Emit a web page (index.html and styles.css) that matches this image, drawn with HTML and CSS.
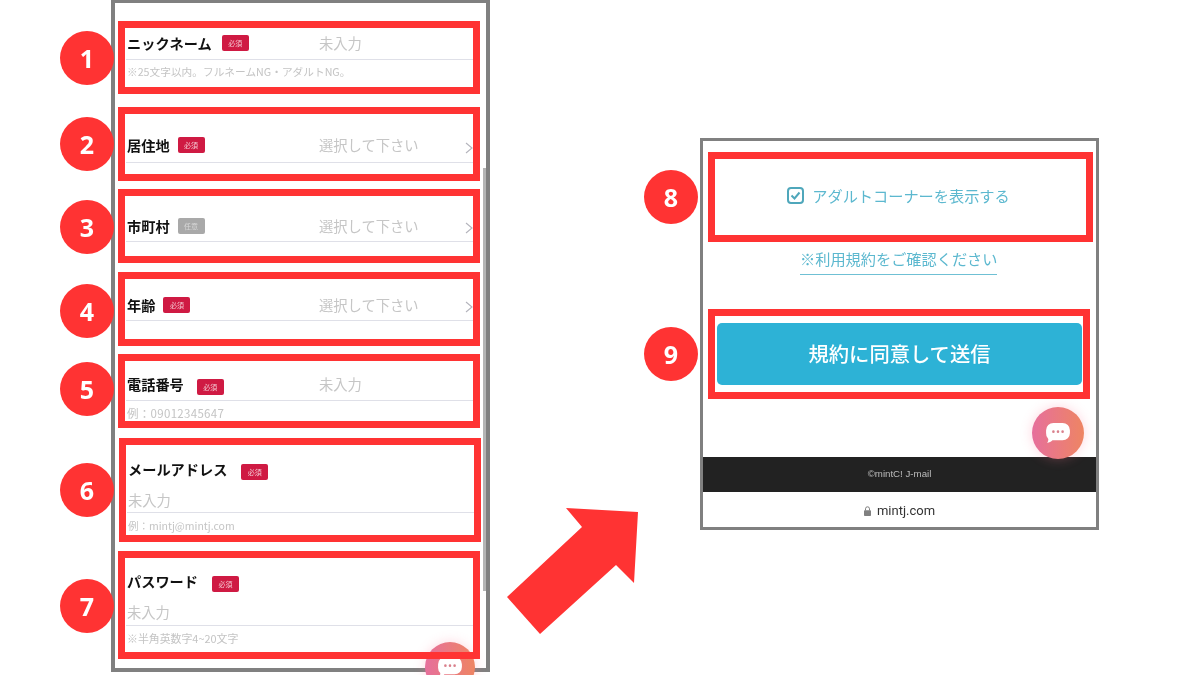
FILE: index.html
```html
<!DOCTYPE html>
<html lang="ja">
<head>
<meta charset="utf-8">
<title>mintC! J-mail 登録フォーム</title>
<link rel="stylesheet" href="styles.css">
</head>
<body>
<main class="stage">
  <section class="phone phone-form">
    <div class="scrollbar"></div>
    <div class="chat chat-form">
      <svg class="chat-icon" viewBox="0 0 28 24"><path d="M9 1h10a8 8 0 0 1 8 8v3a8 8 0 0 1-8 8H8c-1.500 1.600-3.500 2.600-6 3 1-1.200 1.500-2.700 1.400-4.500A8 8 0 0 1 1 12V9a8 8 0 0 1 8-8z" fill="#fff"/><circle cx="9" cy="10.500" r="1.400" fill="#d9808c"/><circle cx="14" cy="10.500" r="1.400" fill="#d9808c"/><circle cx="19" cy="10.500" r="1.400" fill="#d9808c"/></svg>
    </div>

    <div class="field f1">
      <span class="num">1</span>
      <div class="row row-split">
        <div class="label">ニックネーム<span class="badge badge-gap10">必須</span></div>
        <div class="value">未入力</div>
      </div>
      <p class="hint">※25文字以内。フルネームNG・アダルトNG。</p>
    </div>

    <div class="field f2">
      <span class="num">2</span>
      <div class="row row-split">
        <div class="label">居住地<span class="badge">必須</span></div>
        <div class="value">選択して下さい</div>
        <svg class="chevron" viewBox="0 0 8 12"><path d="M1 1l6 5-6 5" fill="none" stroke="#b4b4bc" stroke-width="1.100"/></svg>
      </div>
    </div>

    <div class="field f3">
      <span class="num">3</span>
      <div class="row row-split">
        <div class="label">市町村<span class="badge badge-optional">任意</span></div>
        <div class="value">選択して下さい</div>
        <svg class="chevron" viewBox="0 0 8 12"><path d="M1 1l6 5-6 5" fill="none" stroke="#b4b4bc" stroke-width="1.100"/></svg>
      </div>
    </div>

    <div class="field f4">
      <span class="num">4</span>
      <div class="row row-split">
        <div class="label">年齢<span class="badge">必須</span></div>
        <div class="value">選択して下さい</div>
        <svg class="chevron" viewBox="0 0 8 12"><path d="M1 1l6 5-6 5" fill="none" stroke="#b4b4bc" stroke-width="1.100"/></svg>
      </div>
    </div>

    <div class="field f5">
      <span class="num">5</span>
      <div class="row row-split">
        <div class="label">電話番号<span class="badge badge-wide">必須</span></div>
        <div class="value">未入力</div>
      </div>
      <p class="hint">例：09012345647</p>
    </div>

    <div class="field f6">
      <span class="num">6</span>
      <div class="label label-stack">メールアドレス<span class="badge badge-wide">必須</span></div>
      <div class="row"><div class="value">未入力</div></div>
      <p class="hint">例：mintj@mintj.com</p>
    </div>

    <div class="field f7">
      <span class="num">7</span>
      <div class="label label-stack">パスワード<span class="badge badge-wide">必須</span></div>
      <div class="row"><div class="value">未入力</div></div>
      <p class="hint">※半角英数字4~20文字</p>
    </div>
  </section>

  <svg class="arrow" viewBox="0 0 140 132"><polygon points="59,0 131,4 127,75 109,57 33,126 0,89 75,19" fill="#ff3333"/></svg>

  <section class="phone phone-submit">
    <div class="field f8">
      <span class="num">8</span>
      <div class="adult">
        <svg class="check" viewBox="0 0 17 17"><rect x="1" y="1" width="15" height="15" rx="3" fill="none" stroke="#4fa7bb" stroke-width="2"/><path d="M4.500 8.500l3 3 5-6" fill="none" stroke="#4fa7bb" stroke-width="2"/></svg>
        アダルトコーナーを表示する
      </div>
    </div>
    <a class="terms">※利用規約をご確認ください</a>
    <div class="field f9">
      <span class="num">9</span>
      <div class="submit">規約に同意して送信</div>
    </div>
    <div class="chat chat-submit">
      <svg class="chat-icon" viewBox="0 0 28 24"><path d="M9 1h10a8 8 0 0 1 8 8v3a8 8 0 0 1-8 8H8c-1.500 1.600-3.500 2.600-6 3 1-1.200 1.500-2.700 1.400-4.500A8 8 0 0 1 1 12V9a8 8 0 0 1 8-8z" fill="#fff"/><circle cx="9" cy="10.500" r="1.400" fill="#d9808c"/><circle cx="14" cy="10.500" r="1.400" fill="#d9808c"/><circle cx="19" cy="10.500" r="1.400" fill="#d9808c"/></svg>
    </div>
    <footer class="copyright">©mintC! J-mail</footer>
    <div class="address">
      <svg class="lock" viewBox="0 0 7 10"><path d="M1.500 4.500V2.800a2 2 0 0 1 4 0v1.700" fill="none" stroke="#808080" stroke-width="1"/><rect x="0" y="4.200" width="7" height="5.800" rx=".8" fill="#808080"/></svg>
      mintj.com
    </div>
  </section>
</main>
</body>
</html>
```

FILE: styles.css
```css
* { box-sizing: border-box; }

html, body { margin: 0; padding: 0; background: #fff; }

body {
  font-family: "Noto Sans CJK JP", "Noto Sans", sans-serif;
  color: #111;
}

.stage {
  position: relative;
  width: 1200px;
  height: 675px;
  overflow: hidden;
  background: #fff;
  filter: blur(0.35px);
}

/* phone screenshots placed on the free canvas */
.phone {
  position: absolute;
  display: flex;
  flex-direction: column;
  background: #fff;
  border: solid #808080;
}

.phone-form {
  left: 111px;
  top: -1px;
  width: 379px;
  height: 673px;
  border-width: 4px;
  padding: 18px 0 0 3px;
}

.phone-submit {
  left: 700px;
  top: 138px;
  width: 399px;
  height: 392px;
  border-width: 3px;
  padding: 11px 0 0 5px;
}

.scrollbar {
  position: absolute;
  right: 0;
  top: 165px;
  width: 3px;
  height: 423px;
  background: #b4b4b4;
}

/* annotated fields */
.field {
  position: relative;
  z-index: 1;
  display: flex;
  flex-direction: column;
  width: 362px;
  border: 7px solid #ff3333;
  padding-left: 1px;
}

.f1 { height: 73px; padding-top: 5px; }
.f2 { height: 74px; margin-top: 13px; padding-top: 21px; }
.f3 { height: 74px; margin-top: 8px; padding-top: 20px; }
.f4 { height: 74px; margin-top: 9px; padding-top: 16px; }
.f5 { height: 74px; margin-top: 8px; padding-top: 13px; }
.f6 { height: 104px; margin-top: 10px; margin-left: 1px; padding-top: 14px; }
.f7 { height: 108px; margin-top: 9px; padding-top: 13px; }

.f8 {
  align-items: center;
  justify-content: center;
  width: 385px;
  height: 90px;
  padding: 0 4px 4px 0;
}

.f9 {
  width: 382px;
  height: 90px;
  margin-top: 34px;
  padding: 7px 1px 0 2px;
}

.num {
  position: absolute;
  left: -65px;
  top: 50%;
  width: 54px;
  height: 54px;
  margin-top: -27px;
  border-radius: 50%;
  background: #ff3333;
  color: #fff;
  font-family: "Open Sans", sans-serif;
  font-size: 25px;
  font-weight: 700;
  line-height: 54px;
  text-align: center;
}

.f3 .num { margin-top: -26px; }
.f4 .num { margin-top: -25px; }
.f5 .num { margin-top: -29px; }
.f6 .num { left: -66px; }
.f7 .num { margin-top: -26px; }
.f8 .num, .f9 .num { left: -71px; }

.row {
  display: flex;
  align-items: center;
  height: 20px;
  box-sizing: content-box;
  padding-bottom: 6px;
  border-bottom: 1px solid #dfe0e8;
}

.row-split { position: relative; }
.f2 .row { padding-bottom: 7px; }
.f3 .row, .f4 .row { padding-bottom: 5px; }
.f6 .row { padding-bottom: 2px; }
.f7 .row { padding-bottom: 3px; }

.row-split .label { width: 192px; flex: none; }

.label {
  display: flex;
  align-items: center;
  height: 20px;
  padding-left: 1px;
  font-size: 14.2px;
  font-weight: 700;
  line-height: 20px;
  white-space: nowrap;
}

.label-stack { margin-bottom: 11px; }

.value {
  padding-left: 1px;
  font-size: 14.3px;
  line-height: 20px;
  color: #c6c6c6;
  white-space: nowrap;
}

.badge {
  flex: none;
  width: 27px;
  height: 16px;
  margin-left: 8px;
  border-radius: 2px;
  background: #cf1a43;
  color: #f3c6d0;
  font-size: 7px;
  font-weight: 400;
  line-height: 16px;
  text-align: center;
}

.badge-gap10 { margin-left: 10px; }
.badge-optional { background: #a9a9a9; color: #d8d8d8; }
.badge-wide { margin: 5px 0 0 14px; }
.f5 .badge-wide { margin-left: 13px; }

.chevron {
  position: absolute;
  right: 0;
  top: 6px;
  width: 8px;
  height: 12px;
}

.f2 .chevron { top: 7px; }

.hint {
  margin: 0;
  padding: 3px 0 0 1px;
  font-size: 10.7px;
  line-height: 18px;
  color: #c4c4c4;
  white-space: nowrap;
}

.f5 .hint { padding-top: 2px; font-size: 11.5px; letter-spacing: 0.3px; line-height: 20px; }
.f6 .hint { padding-top: 4px; font-size: 10.5px; }
.f7 .hint { padding-top: 3px; font-size: 10.9px; }

/* submit panel */
.adult {
  display: flex;
  align-items: center;
  gap: 8px;
  font-size: 15.2px;
  line-height: 20px;
  color: #5cb8cf;
  white-space: nowrap;
}

.check { width: 17px; height: 17px; flex: none; }

.terms {
  align-self: flex-start;
  margin: 6px 0 0 92px;
  padding: 0 0 6px;
  border-bottom: 1px solid #6fc0d4;
  font-size: 15.2px;
  line-height: 20px;
  color: #5cb8cf;
  white-space: nowrap;
}

.submit {
  height: 62px;
  border-radius: 5px;
  background: #2db2d6;
  color: #fff;
  font-size: 20.3px;
  font-weight: 500;
  line-height: 60px;
  text-align: center;
}

.chat {
  position: absolute;
  z-index: 0;
  display: flex;
  align-items: center;
  justify-content: center;
  border-radius: 50%;
  background: linear-gradient(90deg, #e66f9c, #ee8563);
  box-shadow: 0 0 12px rgba(255, 120, 150, 0.3);
}

.chat-form { left: 310px; top: 639px; width: 50px; height: 50px; }
.chat-submit { z-index: 2; right: 12px; top: 266px; width: 52px; height: 52px; }
.chat-icon { width: 26px; height: 22px; }

.copyright {
  height: 35px;
  margin: auto 0 0 -5px;
  background: #222;
  color: #bdbdbd;
  font-family: "Liberation Sans", sans-serif;
  font-size: 9.7px;
  line-height: 34px;
  text-align: center;
}

.address {
  display: flex;
  align-items: center;
  justify-content: center;
  gap: 6px;
  height: 35px;
  padding-top: 2px;
  margin-left: -5px;
  font-family: "Roboto", sans-serif;
  font-size: 13px;
  color: #333;
}

.lock { width: 7px; height: 10px; }

.arrow {
  position: absolute;
  left: 507px;
  top: 508px;
  width: 140px;
  height: 132px;
}
```
